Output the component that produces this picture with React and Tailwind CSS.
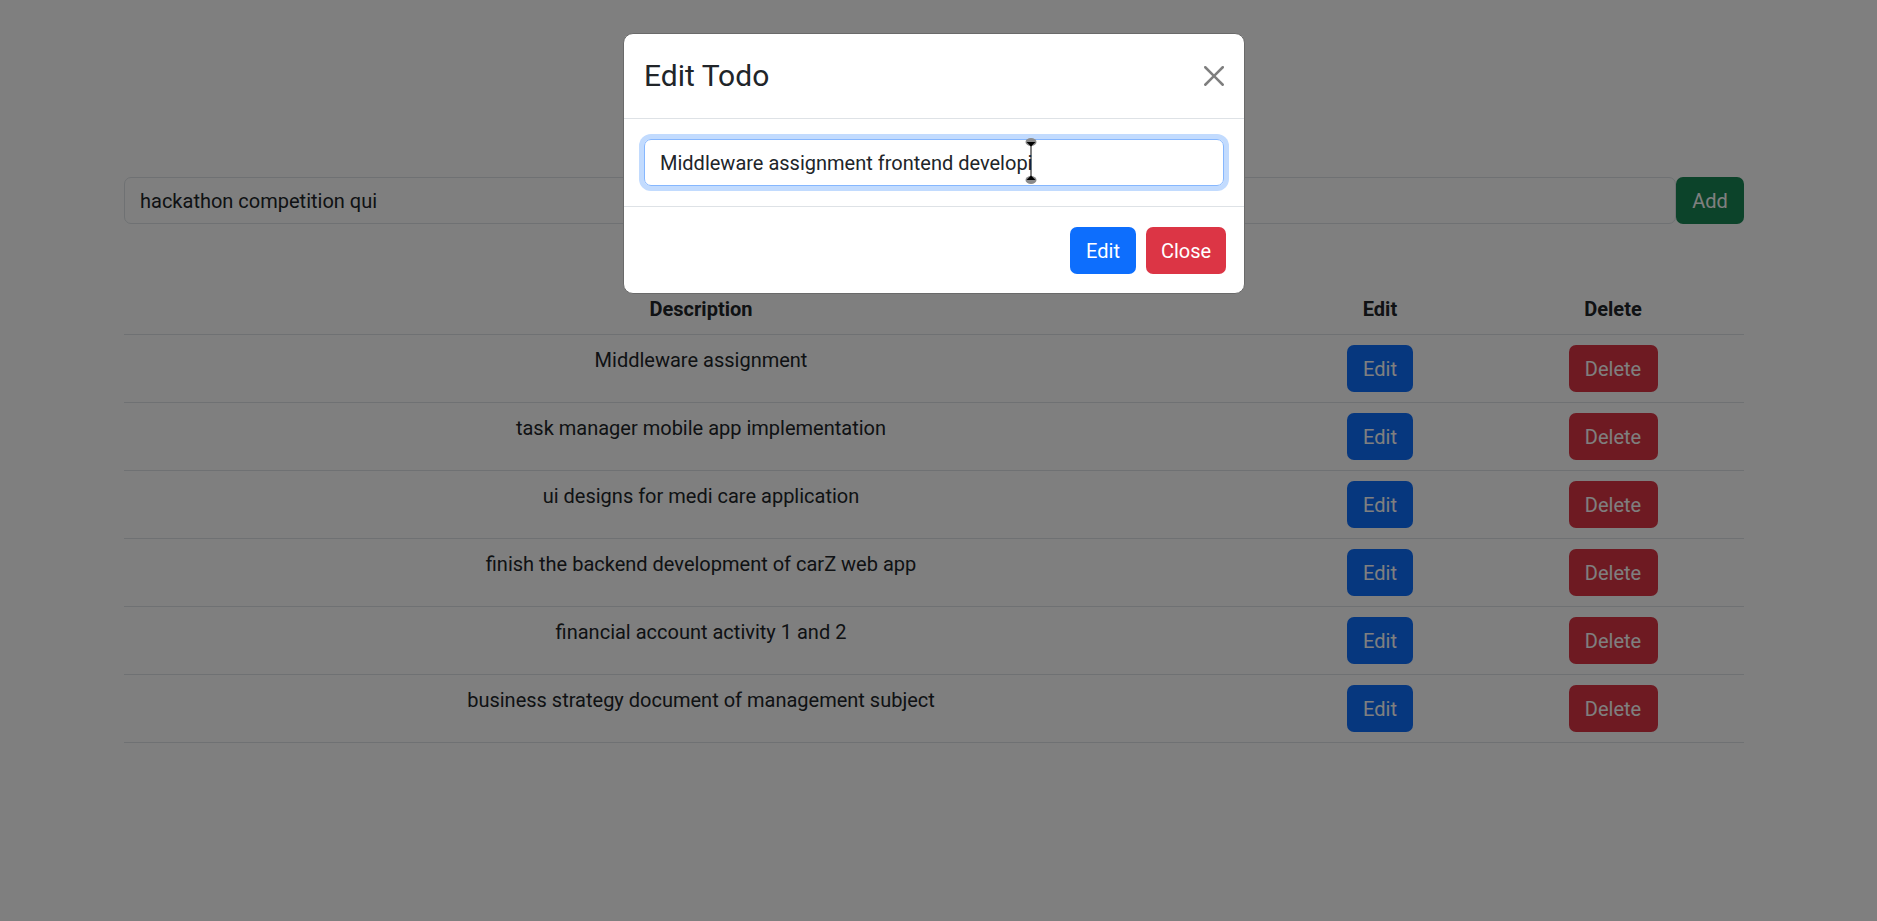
import React, { useState } from "react";

const todos = [
  "Middleware assignment",
  "task manager mobile app implementation",
  "ui designs for medi care application",
  "finish the backend development of carZ web app",
  "financial account activity 1 and 2",
  "business strategy document of management subject",
];

function CloseIcon() {
  return (
    <svg width="20" height="20" viewBox="0 0 16 16" className="opacity-50">
      <path
        fill="#000"
        d="M.293.293a1 1 0 0 1 1.414 0L8 6.586 14.293.293a1 1 0 1 1 1.414 1.414L9.414 8l6.293 6.293a1 1 0 0 1-1.414 1.414L8 9.414l-6.293 6.293a1 1 0 0 1-1.414-1.414L6.586 8 .293 1.707a1 1 0 0 1 0-1.414z"
      />
    </svg>
  );
}

// caret with the touch selection handles, drawn over the input
function CaretHandles() {
  return (
    <svg width="14" height="46" viewBox="0 0 14 46" className="absolute left-[380px] top-[-1px]">
      <ellipse cx="7" cy="4" rx="5.5" ry="4" fill="#8a8a8a" />
      <path d="M2.5 4 L7 8.5 L11.5 4 Z" fill="#000" />
      <line x1="7" y1="6" x2="7" y2="40" stroke="#000" strokeWidth="1" />
      <ellipse cx="7" cy="42" rx="5.5" ry="4" fill="#8a8a8a" />
      <path d="M2.5 42 L7 37.5 L11.5 42 Z" fill="#000" />
    </svg>
  );
}

export default function App() {
  const [task, setTask] = useState("hackathon competition qui");
  const [editText, setEditText] = useState("Middleware assignment frontend developi");

  return (
    <div
      className="min-h-screen bg-white text-[#212529] text-[20px] leading-[30px]"
      style={{ fontFamily: "Roboto, 'Noto Sans', sans-serif" }}
    >
      <div className="w-[1620px] ml-[124px] pt-[177px]">
        {/* Add Todo */}
        <div className="flex">
          <input
            value={task}
            onChange={(e) => setTask(e.target.value)}
            className="flex-1 h-[47px] border border-[#dee2e6] rounded-[7px] px-[15px] text-[20px] text-[#212529] outline-none"
          />
          <button className="w-[68px] h-[47px] rounded-[7px] bg-[#198754] text-white text-[20px]">
            Add
          </button>
        </div>

        {/* Todo table */}
        <table className="mt-[60px] w-full border-collapse">
          <thead>
            <tr className="border-b border-[#dee2e6]">
              <th className="w-[1154px] py-[10px] font-bold text-center">Description</th>
              <th className="w-[204px] py-[10px] font-bold text-center">Edit</th>
              <th className="w-[262px] py-[10px] font-bold text-center">Delete</th>
            </tr>
          </thead>
          <tbody>
            {todos.map((todo, index) => (
              <tr key={index} className="border-b border-[#dee2e6]">
                <td className="py-[10px] text-center align-top">{todo}</td>
                <td className="py-[10px] text-center align-top">
                  <button className="w-[66px] h-[47px] rounded-[7px] bg-[#0d6efd] text-white">
                    Edit
                  </button>
                </td>
                <td className="py-[10px] text-center align-top">
                  <button className="w-[89px] h-[47px] rounded-[7px] bg-[#dc3545] text-white">
                    Delete
                  </button>
                </td>
              </tr>
            ))}
          </tbody>
        </table>
      </div>

      {/* Backdrop */}
      <div className="fixed inset-0 bg-black/50" />

      {/* Edit modal */}
      <div className="fixed inset-0">
        <div className="ml-[623px] mt-[33px] w-[622px] bg-white border border-[#6a6a6a] rounded-[10px]">
          <div className="flex items-center justify-between px-[20px] py-[20px] border-b border-[#dee2e6]">
            <h4 className="text-[30px] leading-[44px] font-normal">Edit Todo</h4>
            <button className="w-[30px] h-[30px] flex items-center justify-center mr-[-5px]">
              <CloseIcon />
            </button>
          </div>
          <div className="p-[20px]">
            <div className="relative">
              <input
                value={editText}
                onChange={(e) => setEditText(e.target.value)}
                className="w-full h-[47px] border border-[#86b7fe] rounded-[7px] px-[15px] text-[20px] text-[#212529] outline-none shadow-[0_0_0_5px_#c2dbfe]"
              />
              <CaretHandles />
            </div>
          </div>
          <div className="flex justify-end gap-[10px] pt-[20px] pb-[19px] pr-[18px] border-t border-[#dee2e6]">
            <button className="w-[66px] h-[47px] rounded-[7px] bg-[#0d6efd] text-white">Edit</button>
            <button className="w-[80px] h-[47px] rounded-[7px] bg-[#dc3545] text-white">Close</button>
          </div>
        </div>
      </div>
    </div>
  );
}
